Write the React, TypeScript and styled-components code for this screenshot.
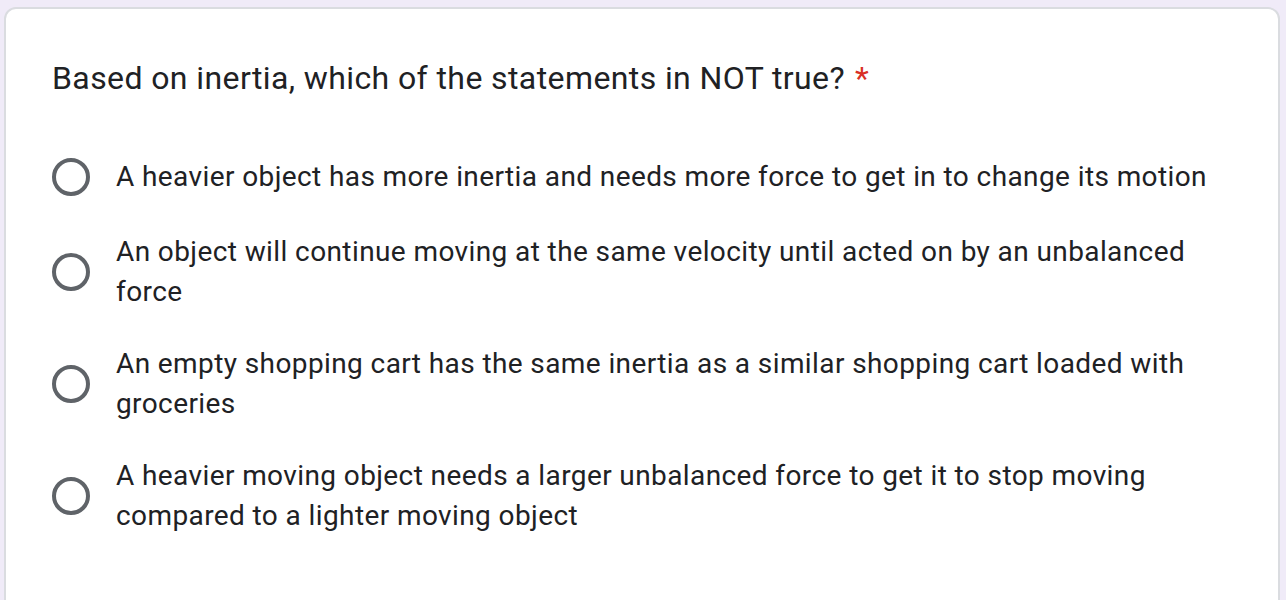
import styled, { createGlobalStyle } from 'styled-components';

const GlobalStyle = createGlobalStyle`
  html, body {
    margin: 0;
    padding: 0;
    background: #f0ebf8;
    overflow: hidden;
  }
`;

const options = [
  'A heavier object has more inertia and needs more force to get in to change its motion',
  'An object will continue moving at the same velocity until acted on by an unbalanced force',
  'An empty shopping cart has the same inertia as a similar shopping cart loaded with groceries',
  'A heavier moving object needs a larger unbalanced force to get it to stop moving compared to a lighter moving object',
];

export default function App() {
  return (
    <Page>
      <GlobalStyle />
      <Card>
        <Question>
          Based on inertia, which of the statements in NOT true?
          <Required>*</Required>
        </Question>
        <OptionList>
          {options.map((text) => (
            <Option key={text}>
              <Radio />
              <Label>{text}</Label>
            </Option>
          ))}
        </OptionList>
      </Card>
    </Page>
  );
}

const Page = styled.div`
  padding: 7px 6px 0 4px;
  height: 600px;
  box-sizing: border-box;
  overflow: hidden;
`;

const Card = styled.div`
  background: #fff;
  border: 2px solid #dadce0;
  border-radius: 12px;
  padding: 45px 48px 80px 46px;
  min-height: 700px;
  box-sizing: border-box;
`;

const Question = styled.div`
  font-family: Roboto, 'Liberation Sans', sans-serif;
  font-size: 32px;
  letter-spacing: 0.4px;
  line-height: 48px;
  color: #202124;
`;

const Required = styled.span`
  color: #d93025;
  margin-left: 10px;
`;

const OptionList = styled.div`
  display: flex;
  flex-direction: column;
  gap: 32px;
  margin-top: 52px;
`;

const Option = styled.div`
  display: flex;
  align-items: center;
  gap: 26px;
  min-height: 46px;
`;

const Radio = styled.div`
  flex: none;
  width: 38px;
  height: 38px;
  border: 4px solid #5f6368;
  border-radius: 50%;
  box-sizing: border-box;
`;

const Label = styled.div`
  font-family: Roboto, 'Liberation Sans', sans-serif;
  font-size: 28px;
  letter-spacing: 0.4px;
  line-height: 40px;
  color: #202124;
`;
